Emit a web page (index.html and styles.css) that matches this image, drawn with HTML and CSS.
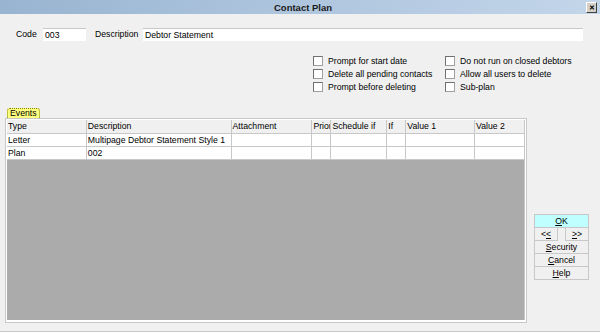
FILE: index.html
```html
<!DOCTYPE html>
<html lang="en">
<head>
    <meta charset="UTF-8">
    <title>Contact Plan</title>
    <link rel="stylesheet" href="styles.css">
</head>
<body>
    <div class="window">
        <div class="titlebar">
            <span class="title">Contact Plan</span>
            <span class="close">&#x2715;</span>
        </div>
        <div class="header-row">
            <label class="lbl lbl-code">Code</label>
            <div class="field field-code">003</div>
            <label class="lbl lbl-desc">Description</label>
            <div class="field field-desc">Debtor Statement</div>
        </div>
        <div class="options">
            <div class="opt-col">
                <div class="opt"><span class="chk"></span>Prompt for start date</div>
                <div class="opt"><span class="chk"></span>Delete all pending contacts</div>
                <div class="opt"><span class="chk"></span>Prompt before deleting</div>
            </div>
            <div class="opt-col">
                <div class="opt"><span class="chk"></span>Do not run on closed debtors</div>
                <div class="opt"><span class="chk"></span>Allow all users to delete</div>
                <div class="opt"><span class="chk"></span>Sub-plan</div>
            </div>
        </div>
        <div class="lower">
            <div class="events">
                <div class="tab">Events</div>
                <div class="grid-frame">
                    <div class="grid">
                        <div class="row head">
                            <div class="c c-type">Type</div>
                            <div class="c c-desc">Description</div>
                            <div class="c c-att">Attachment</div>
                            <div class="c c-pri">Prior</div>
                            <div class="c c-sch">Schedule if</div>
                            <div class="c c-if">If</div>
                            <div class="c c-v1">Value 1</div>
                            <div class="c c-v2">Value 2</div>
                        </div>
                        <div class="row">
                            <div class="c c-type">Letter</div>
                            <div class="c c-desc">Multipage Debtor Statement Style 1</div>
                            <div class="c c-att"></div>
                            <div class="c c-pri"></div>
                            <div class="c c-sch"></div>
                            <div class="c c-if"></div>
                            <div class="c c-v1"></div>
                            <div class="c c-v2"></div>
                        </div>
                        <div class="row">
                            <div class="c c-type">Plan</div>
                            <div class="c c-desc">002</div>
                            <div class="c c-att"></div>
                            <div class="c c-pri"></div>
                            <div class="c c-sch"></div>
                            <div class="c c-if"></div>
                            <div class="c c-v1"></div>
                            <div class="c c-v2"></div>
                        </div>
                        <div class="empty"></div>
                    </div>
                </div>
            </div>
            <div class="buttons">
                <div class="btn btn-ok"><u>O</u>K</div>
                <div class="nav">
                    <div class="btn btn-half">&lt;<u>&lt;</u></div>
                    <div class="btn btn-half"><u>&gt;</u>&gt;</div>
                </div>
                <div class="btn"><u>S</u>ecurity</div>
                <div class="btn"><u>C</u>ancel</div>
                <div class="btn"><u>H</u>elp</div>
            </div>
        </div>
    </div>
</body>
</html>
```

FILE: styles.css
```css
body {
    margin: 0;
    padding: 0;
    background-color: #f0f0f0;
    font-family: 'Liberation Sans', Arial, sans-serif;
    font-size: 8.7px;
    color: #000;
    overflow: hidden;
}
.window {
    width: 600px;
    height: 331px;
    border-bottom: 1px solid #c8c8c8;
}
.titlebar {
    height: 14px;
    background: linear-gradient(to right, #99b4d1, #c3d6ea);
    display: flex;
    align-items: center;
    justify-content: center;
    position: relative;
}
.title {
    font-weight: bold;
    font-size: 9.5px;
    color: #1a1a1a;
    margin-left: 6px;
}
.close {
    position: absolute;
    right: 3px;
    top: 2px;
    width: 9px;
    height: 9px;
    background-color: #d4d0c8;
    border: 1px solid #404040;
    border-top-color: #fff;
    border-left-color: #fff;
    font-size: 7px;
    line-height: 9px;
    text-align: center;
    font-weight: bold;
}
.header-row {
    display: flex;
    align-items: center;
    margin-top: 13px;
    height: 14px;
}
.lbl-code {
    margin-left: 16px;
    width: 27px;
}
.lbl-desc {
    margin-left: 9px;
    width: 48px;
}
.field {
    background-color: #fff;
    border-top: 1px solid #c8c8c8;
    height: 13px;
    line-height: 13px;
    padding-left: 2px;
    box-sizing: border-box;
}
.field-code {
    width: 43px;
}
.field-desc {
    width: 440px;
}
.options {
    display: flex;
    margin-top: 13px;
    margin-left: 313px;
}
.opt-col {
    width: 132px;
}
.opt {
    display: flex;
    align-items: center;
    height: 13px;
}
.chk {
    width: 8px;
    height: 8px;
    background-color: #fff;
    border: 1px solid #a0a0a0;
    border-top-color: #707070;
    border-left-color: #707070;
    margin-right: 5px;
}
.lower {
    display: flex;
    margin-top: 15px;
}
.events {
    margin-left: 5px;
    width: 522px;
}
.tab {
    display: inline-block;
    margin-left: 2px;
    background-color: #ffff80;
    border: 1px dotted #808000;
    border-bottom: none;
    border-radius: 3px 3px 0 0;
    padding: 0 2px;
    height: 9px;
    line-height: 9px;
    vertical-align: bottom;
}
.grid-frame {
    border: 1px solid #c8c8c8;
    padding: 1px 1px 2px 1px;
    height: 200px;
    background-color: #fff;
}
.grid {
    height: 100%;
    display: flex;
    flex-direction: column;
    border-right: 1px solid #c8c8c8;
}
.row {
    display: flex;
    height: 12px;
    border-bottom: 1px solid #c8c8c8;
    background-color: #fff;
}
.row.head {
    height: 13px;
    background-color: #f0f0f0;
}
.c {
    border-right: 1px solid #c8c8c8;
    padding-left: 1px;
    line-height: 12px;
    white-space: nowrap;
    overflow: hidden;
    box-sizing: border-box;
}
.head .c {
    line-height: 13px;
}
.c-type { width: 80px; }
.c-desc { width: 145px; }
.c-att { width: 81px; }
.c-pri { width: 19px; }
.c-sch { width: 56px; }
.c-if { width: 19px; }
.c-v1 { width: 69px; }
.c-v2 { width: 49px; border-right: none; }
.empty {
    flex: 1;
    background-color: #ababab;
}
.buttons {
    margin-left: 7px;
    margin-top: 106px;
    width: 55px;
    display: flex;
    flex-direction: column;
}
.btn {
    height: 12px;
    line-height: 12px;
    text-align: center;
    border: 1px solid #c8c8c8;
    border-top: none;
    background-color: #f0f0f0;
}
.btn-ok {
    background-color: #c0ffff;
    border-top: 1px solid #c8c8c8;
}
.nav {
    display: flex;
    justify-content: space-between;
}
.btn-half {
    width: 22px;
}
```
